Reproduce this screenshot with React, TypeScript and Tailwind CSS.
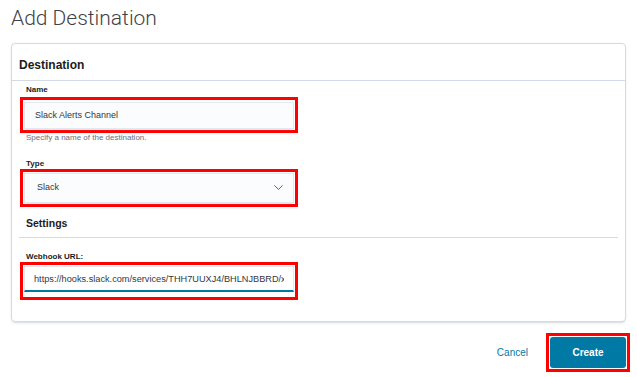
import React from "react";

const inputBase =
  "w-full bg-[#fbfcfd] border border-[#e4e8ef] shadow-[0_1px_1px_-1px_rgba(152,162,179,0.3),0_3px_2px_-2px_rgba(152,162,179,0.3)] text-[9px] text-[#343741] outline-none";

const Label = ({ children }: { children: React.ReactNode }) => (
  <div className="pl-[7px] text-[8px] leading-[10px] font-bold text-[#1a1c21]">
    {children}
  </div>
);

export default function App() {
  return (
    <div className="w-[637px] h-[377px] overflow-hidden bg-white px-[11px] pt-[4px] font-['Liberation_Sans',Arial,sans-serif]">
      <h1 className="font-['Roboto',sans-serif] font-light text-[21px] leading-[28px] text-[#3f4249]">
        Add Destination
      </h1>

      <div className="mt-[11px] rounded-[4px] border border-[#d3dae6] bg-white shadow-[0_2px_2px_-1px_rgba(152,162,179,0.3),0_1px_5px_-2px_rgba(152,162,179,0.3)]">
        <div className="h-[37px] border-b border-[#d3dae6] px-[7px] pt-[14px]">
          <h2 className="text-[12px] leading-[14px] font-bold text-[#1a1c21]">
            Destination
          </h2>
        </div>

        <div className="px-[7px] pt-[4px] pb-[21px]">
          {/* Name */}
          <Label>Name</Label>
          <div className="mt-[2px] ml-px w-[278px] border-[3px] border-[#ff0000] p-px">
            <input
              readOnly
              value="Slack Alerts Channel"
              className={`${inputBase} h-[27px] pl-[10px]`}
            />
          </div>
          <div className="pl-[7px] text-[8px] leading-[9px] text-[#69707d]">
            Specify a name of the destination.
          </div>

          {/* Type */}
          <div className="mt-[17px]">
            <Label>Type</Label>
          </div>
          <div className="ml-px w-[278px] border-[3px] border-[#ff0000] p-px">
            <div
              className={`${inputBase} h-[30px] pl-[12px] pr-[10px] flex items-center justify-between`}
            >
              <span>Slack</span>
              <svg width="9" height="5" viewBox="0 0 9 5" fill="none">
                <path
                  d="M0.4 0.4 L4.5 4.4 L8.6 0.4"
                  stroke="#343741"
                  strokeWidth="0.8"
                />
              </svg>
            </div>
          </div>

          {/* Settings */}
          <div className="mt-[10px] pl-[7px] pb-[7px] border-b border-[#d3dae6] text-[10.5px] leading-[13px] font-bold text-[#1a1c21]">
            Settings
          </div>

          <div className="mt-[14px]">
            <Label>Webhook URL:</Label>
          </div>
          <div className="ml-px w-[278px] border-[3px] border-[#ff0000] pt-0 pb-[5px] px-px">
            <input
              readOnly
              value="https://hooks.slack.com/services/THH7UUXJ4/BHLNJBBRD/xxxxxxxxxxxxxxxxxxxxxxxx"
              className="w-full h-[26px] bg-white border border-[#e4e8ef] border-b-2 border-b-[#0079a5] pl-[9px] pr-[9px] text-[9.2px] text-[#343741] outline-none"
            />
          </div>
        </div>
      </div>

      <div className="mt-[11px] -mr-[4px] flex items-center justify-end gap-[18px]">
        <button className="text-[10px] text-[#0079a5]">Cancel</button>
        <div className="border-[3px] border-[#ff0000] p-px">
          <button className="w-[76px] h-[31px] rounded-[3px] bg-[#0079a5] text-[10px] font-bold text-white">
            Create
          </button>
        </div>
      </div>
    </div>
  );
}
